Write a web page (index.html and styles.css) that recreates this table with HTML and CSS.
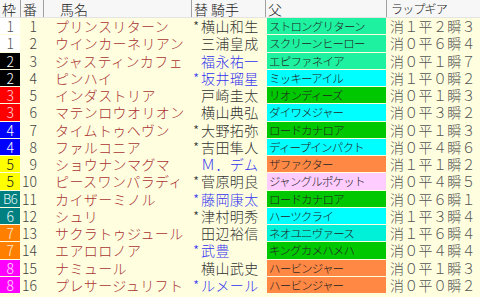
FILE: index.html
```html
<!DOCTYPE html>
<html lang="ja">
<head>
<meta charset="utf-8">
<link rel="stylesheet" href="styles.css">
</head>
<body>
<div class="table">
  <div class="row head">
    <div class="h">枠</div>
    <div class="h">番</div>
    <div class="h c-name">馬名</div>
    <div class="h">替 騎手</div>
    <div class="h">父</div>
    <div class="h c-gear">ラップギア</div>
  </div>

  <div class="row"><div class="waku w1">1</div><div class="ban">1</div><div class="name">プリンスリターン</div><div class="jk"><span class="mk">*</span>横山和生</div><div class="sire s-sg">ストロングリターン</div><div class="gear">消１平２瞬３</div></div>
  <div class="row"><div class="waku w1">1</div><div class="ban">2</div><div class="name">ウインカーネリアン</div><div class="jk"><span class="mk"></span>三浦皇成</div><div class="sire s-sg">スクリーンヒーロー</div><div class="gear">消０平６瞬４</div></div>
  <div class="row"><div class="waku w2">2</div><div class="ban">3</div><div class="name">ジャスティンカフェ</div><div class="jk blue"><span class="mk"></span>福永祐一</div><div class="sire s-sg">エピファネイア</div><div class="gear">消０平１瞬７</div></div>
  <div class="row"><div class="waku w2">2</div><div class="ban">4</div><div class="name">ピンハイ</div><div class="jk blue"><span class="mk">*</span>坂井瑠星</div><div class="sire s-cy">ミッキーアイル</div><div class="gear">消１平０瞬２</div></div>
  <div class="row"><div class="waku w3">3</div><div class="ban">5</div><div class="name">インダストリア</div><div class="jk"><span class="mk"></span>戸崎圭太</div><div class="sire s-gr">リオンディーズ</div><div class="gear">消０平１瞬３</div></div>
  <div class="row"><div class="waku w3">3</div><div class="ban">6</div><div class="name">マテンロウオリオン</div><div class="jk"><span class="mk"></span>横山典弘</div><div class="sire s-cy">ダイワメジャー</div><div class="gear">消０平３瞬２</div></div>
  <div class="row"><div class="waku w4">4</div><div class="ban">7</div><div class="name">タイムトゥヘヴン</div><div class="jk"><span class="mk">*</span>大野拓弥</div><div class="sire s-gr">ロードカナロア</div><div class="gear">消０平１瞬３</div></div>
  <div class="row"><div class="waku w4">4</div><div class="ban">8</div><div class="name">ファルコニア</div><div class="jk"><span class="mk">*</span>吉田隼人</div><div class="sire s-cy">ディープインパクト</div><div class="gear">消０平４瞬６</div></div>
  <div class="row"><div class="waku w5">5</div><div class="ban">9</div><div class="name">ショウナンマグマ</div><div class="jk blue"><span class="mk"></span>Ｍ．デム</div><div class="sire s-or">ザファクター</div><div class="gear">消１平１瞬２</div></div>
  <div class="row"><div class="waku w5">5</div><div class="ban">10</div><div class="name">ピースワンパラディ</div><div class="jk"><span class="mk">*</span>菅原明良</div><div class="sire s-pk">ジャングルポケット</div><div class="gear">消０平４瞬５</div></div>
  <div class="row"><div class="waku w6 tight">B6</div><div class="ban">11</div><div class="name">カイザーミノル</div><div class="jk blue"><span class="mk">*</span>藤岡康太</div><div class="sire s-gr">ロードカナロア</div><div class="gear">消０平６瞬１</div></div>
  <div class="row"><div class="waku w6">6</div><div class="ban">12</div><div class="name">シュリ</div><div class="jk"><span class="mk">*</span>津村明秀</div><div class="sire s-cy">ハーツクライ</div><div class="gear">消１平３瞬４</div></div>
  <div class="row"><div class="waku w7">7</div><div class="ban">13</div><div class="name">サクラトゥジュール</div><div class="jk"><span class="mk"></span>田辺裕信</div><div class="sire s-tq">ネオユニヴァース</div><div class="gear">消１平６瞬４</div></div>
  <div class="row"><div class="waku w7">7</div><div class="ban">14</div><div class="name">エアロロノア</div><div class="jk blue"><span class="mk">*</span>武豊</div><div class="sire s-gr">キングカメハメハ</div><div class="gear">消０平４瞬４</div></div>
  <div class="row"><div class="waku w8">8</div><div class="ban">15</div><div class="name">ナミュール</div><div class="jk"><span class="mk"></span>横山武史</div><div class="sire s-or">ハービンジャー</div><div class="gear">消０平１瞬３</div></div>
  <div class="row"><div class="waku w8">8</div><div class="ban">16</div><div class="name">プレサージュリフト</div><div class="jk blue"><span class="mk">*</span>ルメール</div><div class="sire s-or">ハービンジャー</div><div class="gear">消０平０瞬２</div></div>
</div>
</body>
</html>
```

FILE: styles.css
```css
html, body {
  margin: 0;
  padding: 0;
  background: #ffffe0;
}
body {
  width: 480px;
  height: 297px;
  overflow: hidden;
  font-family: "Noto Sans CJK JP", "Noto Sans", sans-serif;
  font-size: 14px;
  font-weight: 300;
  color: #333;
}
.table {
  display: flex;
  flex-direction: column;
}
.row {
  display: grid;
  grid-template-columns: 21px 23px 148px 74px 121px 93px;
  height: 17.25px;
  box-sizing: border-box;
  padding-bottom: 1px;
}
.row > div {
  display: flex;
  align-items: center;
  white-space: nowrap;
  line-height: 16px;
  min-width: 0;
}
.row.head {
  height: 18px;
  padding-bottom: 0;
  background: #f7f7f7;
  border-bottom: 1px solid #e4e4e4;
}
.h {
  border-right: 1px solid #a0a0a0;
  padding-left: 2px;
  color: #222;
}
.h.c-name { padding-left: 16px; }
.h.c-gear {
  padding-left: 4px;
  font-size: 12px;
  letter-spacing: -0.8px;
  border-right: 0;
}
.waku {
  justify-content: flex-end;
  padding-right: 6px;
  margin-right: 1px;
}
.waku.tight {
  padding-right: 3px;
  font-size: 13px;
  letter-spacing: -0.6px;
}
.w1 { background: #ffffff; color: #555; }
.w2 { background: #000000; color: #fff; }
.w3 { background: #ff0000; color: #ffd8d8; }
.w4 { background: #0000ff; color: #fff; }
.w5 { background: #ffff00; color: #222; }
.w6 { background: #008080; color: #e8f8f8; }
.w7 { background: #ff8000; color: #ffe8d0; }
.w8 { background: #ff00ff; color: #ffe0ff; }
.ban {
  justify-content: flex-end;
  padding-right: 7px;
  color: #444;
}
.name {
  padding-left: 11px;
  color: #a33;
  letter-spacing: 0.4px;
}
.jk {
  padding-left: 1px;
  color: #333;
  letter-spacing: 0.4px;
}
.jk.blue { color: #3333ee; }
.mk {
  display: inline-block;
  width: 8px;
  letter-spacing: 0;
}
.sire {
  margin-left: 1px;
  margin-right: 1px;
  padding-left: 2px;
  font-size: 11.5px;
  letter-spacing: -0.8px;
  color: #222;
}
.s-sg { background: #1ef2a0; }
.s-cy { background: #00ffff; }
.s-gr { background: #00c800; }
.s-or { background: #ff8844; }
.s-pk { background: #ffccff; }
.s-tq { background: #00f0d8; }
.gear {
  padding-left: 3px;
  color: #555;
  letter-spacing: 0.3px;
}
```
